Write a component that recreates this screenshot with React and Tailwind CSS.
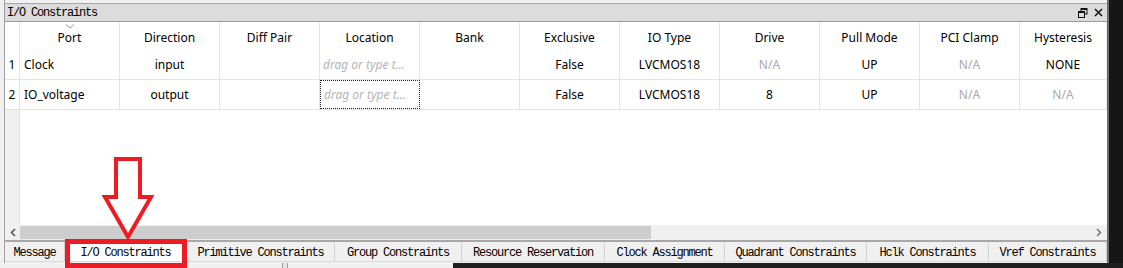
import React from 'react';

const COLUMNS = [
  { id: 'port', label: 'Port', w: 'w-[100px]' },
  { id: 'dir', label: 'Direction', w: 'w-[100px]' },
  { id: 'diff', label: 'Diff Pair', w: 'w-[100px]' },
  { id: 'loc', label: 'Location', w: 'w-[100px]' },
  { id: 'bank', label: 'Bank', w: 'w-[100px]' },
  { id: 'excl', label: 'Exclusive', w: 'w-[100px]' },
  { id: 'iotype', label: 'IO Type', w: 'w-[100px]' },
  { id: 'drive', label: 'Drive', w: 'w-[100px]' },
  { id: 'pull', label: 'Pull Mode', w: 'w-[100px]' },
  { id: 'pci', label: 'PCI Clamp', w: 'w-[100px]' },
  { id: 'hyst', label: 'Hysteresis', w: 'w-[87px]' },
];

const ROWS = [
  {
    n: 1,
    port: 'Clock',
    dir: 'input',
    excl: 'False',
    iotype: 'LVCMOS18',
    drive: 'N/A',
    pull: 'UP',
    pci: 'N/A',
    hyst: 'NONE',
  },
  {
    n: 2,
    port: 'IO_voltage',
    dir: 'output',
    excl: 'False',
    iotype: 'LVCMOS18',
    drive: '8',
    pull: 'UP',
    pci: 'N/A',
    hyst: 'N/A',
    focused: true,
  },
];

const TABS = [
  { label: 'Message', w: 'w-[60px]' },
  { label: 'I/O Constraints', w: 'w-[122px]', active: true },
  { label: 'Primitive Constraints', w: 'w-[148px]' },
  { label: 'Group Constraints', w: 'w-[127px]' },
  { label: 'Resource Reservation', w: 'w-[143px]' },
  { label: 'Clock Assignment', w: 'w-[120px]' },
  { label: 'Quadrant Constraints', w: 'w-[142px]' },
  { label: 'Hclk Constraints', w: 'w-[122px]' },
  { label: 'Vref Constraints', w: 'w-[118px]' },
];

const mono = { fontFamily: '"Liberation Mono", "DejaVu Sans Mono", monospace' };

const Cell = ({ col, row }) => {
  const v = row[col.id];
  if (col.id === 'loc') {
    return (
      <div
        className={`${col.w} h-full shrink-0 flex items-center px-[3px] italic text-[#b4b4b4] ${
          row.focused ? 'border border-dotted border-[#222]' : 'border-r border-[#e3e3e3]'
        }`}
      >
        <span className="truncate">drag or type t...</span>
      </div>
    );
  }
  const muted = v === 'N/A';
  return (
    <div
      className={`${col.w} h-full shrink-0 border-r border-[#e3e3e3] flex items-center ${
        col.id === 'port' ? 'justify-start pl-[4px]' : 'justify-center'
      } ${muted ? 'text-[#a8a8a8]' : 'text-black'}`}
    >
      {v}
    </div>
  );
};

export default function App() {
  return (
    <div className="relative w-[1123px] h-[268px] overflow-hidden bg-[#f0f0f0] flex flex-col">
      <div className="flex h-[263px]">
        <div className="w-[4px] bg-[#f0f0f0]" />

        <div className="w-[1105px] flex flex-col border-l border-[#a0a0a0] border-r-2 border-r-[#6e6e6e] bg-[#f0f0f0]">
          <div className="h-[4px] border-b border-[#a8a8a8]" />

          {/* title bar */}
          <div className="h-[18px] bg-[#dcdcdc] border-b border-[#9a9a9a] flex items-center justify-between pl-[2px] pr-[4px]">
            <span className="text-[12px] tracking-[-1.2px] text-black" style={mono}>
              I/O Constraints
            </span>
            <div className="flex items-center gap-[6px]">
              <svg width="10" height="10" viewBox="0 0 10 10">
                <rect x="3" y="0.5" width="6" height="5.5" fill="none" stroke="#111" strokeWidth="1" />
                <rect x="3" y="0.5" width="6" height="1.5" fill="#111" />
                <rect x="0.5" y="3.5" width="6" height="6" fill="#dcdcdc" stroke="#111" strokeWidth="1" />
                <rect x="0.5" y="3.5" width="6" height="1.5" fill="#111" />
              </svg>
              <svg width="9" height="9" viewBox="0 0 9 9">
                <path d="M1 1 L8 8 M8 1 L1 8" stroke="#111" strokeWidth="1.5" />
              </svg>
            </div>
          </div>

          {/* table */}
          <div
            className="h-[203px] bg-white flex flex-col text-[12px]"
            style={{ fontFamily: '"Noto Sans", "Open Sans", sans-serif' }}
          >
            <div className="flex h-[28px]">
              <div className="w-[15px] shrink-0 border-r border-[#e3e3e3]" />
              {COLUMNS.map((c, i) => (
                <div
                  key={c.id}
                  className={`${c.w} relative shrink-0 border-r border-[#e3e3e3] flex items-center justify-center pt-[3px] text-black`}
                >
                  {i === 0 && (
                    <svg className="absolute top-[2px] left-1/2 -translate-x-1/2" width="9" height="5" viewBox="0 0 9 5">
                      <path d="M0.5 0.5 L4.5 4 L8.5 0.5" fill="none" stroke="#9a9a9a" strokeWidth="1" />
                    </svg>
                  )}
                  {c.label}
                </div>
              ))}
            </div>

            {ROWS.map((r) => (
              <div key={r.n} className="flex h-[30px] border-b border-[#e3e3e3]">
                <div className="w-[15px] shrink-0 border-r border-[#e3e3e3] flex items-center justify-center text-black">
                  {r.n}
                </div>
                {COLUMNS.map((c) => (
                  <Cell key={c.id} col={c} row={r} />
                ))}
              </div>
            ))}

            <div className="flex flex-1">
              <div className="w-[15px] shrink-0 bg-[#f0f0f0] border-r border-[#e3e3e3]" />
              <div className="flex-1" />
            </div>
          </div>

          {/* horizontal scrollbar */}
          <div className="h-[15px] flex bg-[#f0f0f0]">
            <div className="w-[15px] flex items-center justify-center">
              <svg width="6" height="9" viewBox="0 0 6 9">
                <path d="M5 1 L1.5 4.5 L5 8" fill="none" stroke="#555" strokeWidth="1.6" />
              </svg>
            </div>
            <div className="w-[631px] my-[1px] bg-[#cdcdcd]" />
            <div className="flex-1" />
            <div className="w-[17px] flex items-center justify-center">
              <svg width="6" height="9" viewBox="0 0 6 9">
                <path d="M1 1 L4.5 4.5 L1 8" fill="none" stroke="#777" strokeWidth="1.6" />
              </svg>
            </div>
          </div>

          {/* tabs */}
          <div className="h-[22px] flex border-t-2 border-[#a8a8a8] border-b border-b-[#dadada] bg-[#f0f0f0]" style={mono}>
            {TABS.map((t) => (
              <div
                key={t.label}
                className={`${t.w} shrink-0 flex items-center justify-center pt-[2px] border-r border-[#d2d2d2] text-[12px] tracking-[-1.2px] text-black ${
                  t.active ? 'bg-white' : ''
                }`}
              >
                {t.label}
              </div>
            ))}
          </div>
        </div>

        <div className="flex-1 bg-[#161616]" />
      </div>

      {/* bottom edge */}
      <div className="h-[5px] flex">
        <div className="w-[283px] bg-[#f0f0f0] border-r border-[#a0a0a0]" />
        <div className="w-[5px] bg-[#e6e6e6] border-r border-[#a0a0a0]" />
        <div className="w-[165px] bg-[#f0f0f0]" />
        <div className="flex-1 bg-[#1e1e1e]" />
      </div>

      {/* red annotation */}
      <svg className="absolute left-[100px] top-[155px]" width="60" height="90" viewBox="0 0 60 90">
        <path
          d="M16 4 L40 4 L40 42 L51 42 L28 82 L5 42 L16 42 Z"
          fill="white"
          stroke="#ed1c24"
          strokeWidth="4"
          strokeLinejoin="miter"
        />
      </svg>
      <div className="absolute left-[65px] top-[239px] w-[122px] h-[29px] border-[5px] border-[#ed1c24]" />
    </div>
  );
}
